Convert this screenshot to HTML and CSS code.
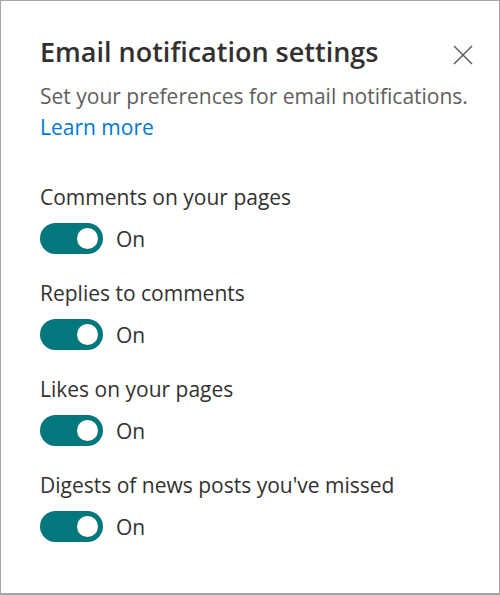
FILE: index.html
```html
<!DOCTYPE html>
<html lang="en">
<head>
<meta charset="utf-8">
<title>Email notification settings</title>
<link rel="stylesheet" href="styles.css">
</head>
<body>
<div class="panel">
  <div class="header">
    <h1 class="title">Email notification settings</h1>
    <button class="close" aria-label="Close">
      <svg width="20" height="20" viewBox="0 0 20 20"><path d="M1 1 L19 19 M19 1 L1 19" stroke="#605e5c" stroke-width="1.5" fill="none"/></svg>
    </button>
  </div>
  <p class="desc">Set your preferences for email notifications. <a class="link" href="#">Learn more</a></p>
  <div class="settings">
    <div class="setting">
      <div class="label">Comments on your pages</div>
      <div class="toggle-row"><span class="toggle"><span class="knob"></span></span><span class="state">On</span></div>
    </div>
    <div class="setting">
      <div class="label">Replies to comments</div>
      <div class="toggle-row"><span class="toggle"><span class="knob"></span></span><span class="state">On</span></div>
    </div>
    <div class="setting">
      <div class="label">Likes on your pages</div>
      <div class="toggle-row"><span class="toggle"><span class="knob"></span></span><span class="state">On</span></div>
    </div>
    <div class="setting">
      <div class="label">Digests of news posts you've missed</div>
      <div class="toggle-row"><span class="toggle"><span class="knob"></span></span><span class="state">On</span></div>
    </div>
  </div>
</div>
</body>
</html>
```
FILE: styles.css
```css
html, body {
  margin: 0;
  padding: 0;
  background: #ffffff;
}
.panel {
  box-sizing: border-box;
  width: 500px;
  height: 595px;
  border: 1px solid #a6a6a6;
  border-bottom-width: 2px;
  padding: 33px 26px 0 39px;
  font-family: "Open Sans", "Liberation Sans", sans-serif;
  color: #323130;
}
.header {
  display: flex;
  justify-content: space-between;
  align-items: flex-start;
}
.title {
  margin: 0;
  font-size: 27px;
  font-weight: 600;
  line-height: 36px;
  color: #323130;
}
.close {
  border: 0;
  background: none;
  padding: 0;
  margin-top: 11px;
  width: 20px;
  height: 20px;
  display: flex;
}
.desc {
  margin: 11px 0 0 0;
  width: 440px;
  font-size: 21px;
  line-height: 31px;
  color: #605e5c;
}
.link {
  color: #0078d4;
  text-decoration: none;
}
.settings {
  margin-top: 40px;
  display: flex;
  flex-direction: column;
  gap: 25px;
}
.setting {
  display: flex;
  flex-direction: column;
  gap: 12px;
}
.label {
  font-size: 21px;
  line-height: 28px;
}
.toggle-row {
  display: flex;
  align-items: center;
  gap: 13px;
}
.toggle {
  box-sizing: border-box;
  width: 63px;
  height: 31px;
  border-radius: 16px;
  background: #03787c;
  display: flex;
  align-items: center;
  justify-content: flex-end;
  padding-right: 5px;
}
.knob {
  width: 21px;
  height: 21px;
  border-radius: 50%;
  background: #ffffff;
}
.state {
  font-size: 21px;
  line-height: 28px;
}
```
